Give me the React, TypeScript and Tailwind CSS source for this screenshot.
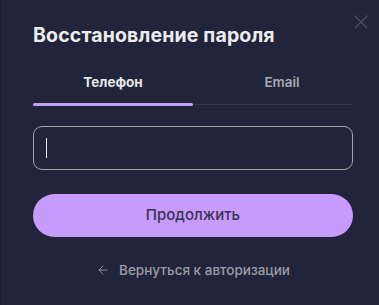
import { ArrowLeft, X } from 'lucide-react';

export default function App() {
  return (
    <div
      className="relative w-[379px] h-[305px] bg-[#222539] border-l border-[#1c1c24] overflow-hidden"
      style={{ fontFamily: 'Inter, "Noto Sans", sans-serif' }}
    >
      <button className="absolute right-[6px] top-[10px] text-[#4b4f68]" aria-label="Закрыть">
        <X className="w-[24px] h-[24px]" strokeWidth={1.2} />
      </button>

      <div className="pl-[32px] pr-[26px] pt-[22px]">
        <h2 className="text-[19.5px] leading-[26px] font-bold text-[#ececf0] tracking-[0.15px]">
          Восстановление пароля
        </h2>

        <div className="mt-[25px] flex">
          <div className="flex-1 flex flex-col items-center">
            <span className="text-[13.5px] leading-[18px] font-bold text-[#e6e6ea]">Телефон</span>
            <div className="mt-[12px] h-[3px] w-full bg-[#c69cfb] rounded-sm" />
          </div>
          <div className="flex-1 flex flex-col items-center">
            <span className="ml-[18px] text-[13.5px] leading-[18px] font-semibold text-[#a9a9b4]">Email</span>
            <div className="mt-[13px] h-[1px] w-full bg-[#34374b]" />
          </div>
        </div>

        <div className="mt-[20px] h-[44px] rounded-[9px] border border-[#a3a3ae] flex items-center px-[12px]">
          <div className="w-[1px] h-[20px] bg-[#e8e8ee]" />
        </div>

        <button className="mt-[24px] w-full h-[43px] rounded-full bg-[#c69bfb] text-[15px] text-[#3a3350] font-medium">
          Продолжить
        </button>

        <div className="mt-[23px] flex items-center justify-center gap-[9px] text-[#9c9ca8]">
          <ArrowLeft className="w-[14px] h-[14px]" strokeWidth={1.5} />
          <span className="text-[13.5px] font-medium">Вернуться к авторизации</span>
        </div>
      </div>
    </div>
  );
}
